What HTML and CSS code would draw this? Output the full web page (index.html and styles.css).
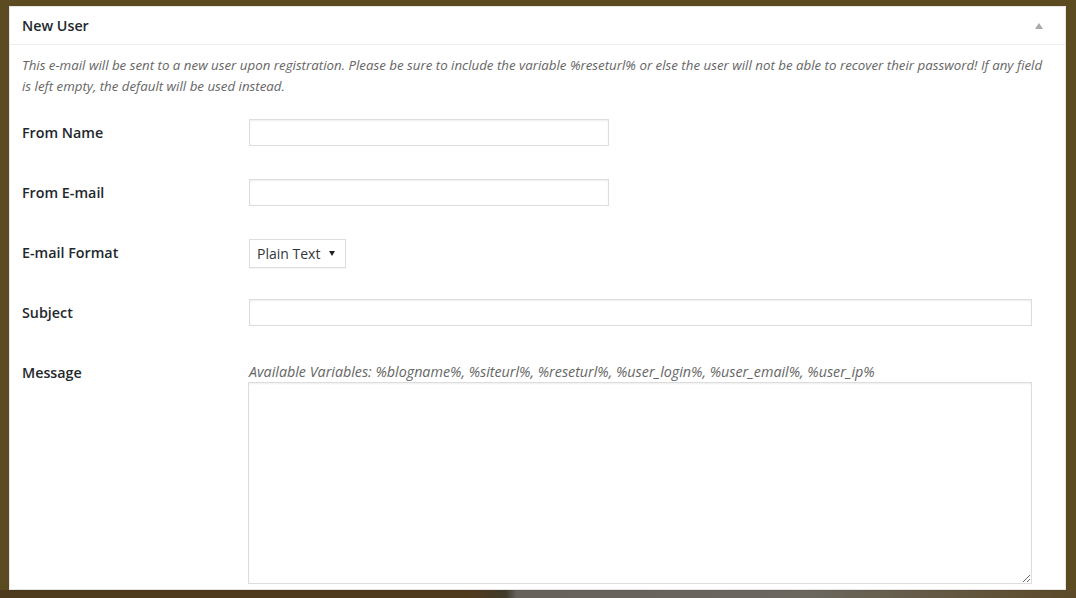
FILE: index.html
```html
<!DOCTYPE html>
<html lang="en">
<head>
    <meta charset="UTF-8">
    <meta name="viewport" content="width=device-width, initial-scale=1.0">
    <title>New User E-mail</title>
    <link rel="stylesheet" href="styles.css">
</head>
<body>
    <div class="postbox">
        <!-- Box header -->
        <div class="postbox-head">
            <h2>New User</h2>
            <span class="toggle-arrow"></span>
        </div>

        <div class="inside">
            <p class="description">This e-mail will be sent to a new user upon registration. Please be sure to include the variable %reseturl% or else the user will not be able to recover their password! If any field is left empty, the default will be used instead.</p>

            <!-- Settings rows -->
            <div class="form-rows">
                <div class="form-row">
                    <label for="from_name">From Name</label>
                    <div class="field"><input type="text" id="from_name" class="regular-text"></div>
                </div>
                <div class="form-row">
                    <label for="from_email">From E-mail</label>
                    <div class="field"><input type="text" id="from_email" class="regular-text"></div>
                </div>
                <div class="form-row">
                    <label for="format">E-mail Format</label>
                    <div class="field">
                        <span class="select-wrap">
                            <select id="format">
                                <option>Plain Text</option>
                                <option>HTML</option>
                            </select>
                        </span>
                    </div>
                </div>
                <div class="form-row">
                    <label for="subject">Subject</label>
                    <div class="field"><input type="text" id="subject" class="large-text"></div>
                </div>
                <div class="form-row">
                    <label for="message">Message</label>
                    <div class="field">
                        <p class="hint">Available Variables: %blogname%, %siteurl%, %reseturl%, %user_login%, %user_email%, %user_ip%</p>
                        <textarea id="message"></textarea>
                    </div>
                </div>
            </div>
        </div>
    </div>
</body>
</html>
```

FILE: styles.css
```css
/* General Reset */
* {
    box-sizing: border-box;
    margin: 0;
    padding: 0;
}
body {
    height: 100vh;
    padding: 6px 10px 8px 9px;
    background-color: #5c4a21;
    /* darker photo strip along the bottom edge */
    background-image: linear-gradient(90deg, #4e3a1c 0%, #503a1e 44%, #3f3a2c 47%, #66625c 48%, #6b675f 75%, #5c4a28 100%);
    background-size: 100% 8px;
    background-position: bottom;
    background-repeat: no-repeat;
    font-family: "Open Sans", "Noto Sans", sans-serif;
    color: #444;
}

/* Postbox */
.postbox {
    height: 100%;
    background: #fff;
    border: 1px solid #e5e5e5;
    box-shadow: 0 1px 1px rgba(0, 0, 0, 0.04);
}
.postbox-head {
    display: flex;
    justify-content: space-between;
    align-items: center;
    height: 38px;
    padding: 0 12px;
    border-bottom: 1px solid #eee;
}
.postbox-head h2 {
    font-size: 14.3px;
    font-weight: 600;
    color: #23282d;
}
.toggle-arrow {
    width: 0;
    height: 0;
    margin-right: 10px;
    border-left: 4px solid transparent;
    border-right: 4px solid transparent;
    border-bottom: 6px solid #aaa;
}

/* Inside */
.inside {
    padding: 10px 12px 0 12px;
}
.description {
    font-size: 13.3px;
    line-height: 21px;
    font-style: italic;
    color: #666;
}

/* Form rows */
.form-rows {
    margin-top: 7px;
    padding-right: 21px;
}
.form-row {
    display: grid;
    grid-template-columns: 227px 1fr;
    height: 60px;
    padding-top: 15px;
}
.form-row:last-child {
    height: auto;
}
.form-row label {
    font-size: 14.3px;
    font-weight: 600;
    line-height: 28px;
    color: #23282d;
}

input, select, textarea {
    font-family: inherit;
    font-size: 14px;
    color: #32373c;
    background: #fff;
    border: 1px solid #ddd;
    box-shadow: inset 0 1px 2px rgba(0, 0, 0, 0.07);
    outline: none;
}
.regular-text {
    display: block;
    width: 360px;
    height: 27px;
}
.large-text {
    display: block;
    width: 100%;
    height: 27px;
}

/* Select with small arrow */
.select-wrap {
    position: relative;
    display: inline-block;
}
.select-wrap select {
    appearance: none;
    -webkit-appearance: none;
    width: 97px;
    height: 29px;
    padding: 0 20px 0 7px;
    border-radius: 0;
    box-shadow: 0 1px 1px rgba(0, 0, 0, 0.04);
}
.select-wrap::after {
    content: "";
    position: absolute;
    right: 11px;
    top: 12px;
    border-left: 3px solid transparent;
    border-right: 3px solid transparent;
    border-top: 5px solid #222;
    pointer-events: none;
}

.hint {
    margin-top: 3px;
    font-size: 14.3px;
    line-height: 20px;
    font-style: italic;
    color: #666;
}
textarea {
    display: block;
    width: calc(100% + 1px);
    margin-left: -1px;
    height: 202px;
    resize: vertical;
}
```
